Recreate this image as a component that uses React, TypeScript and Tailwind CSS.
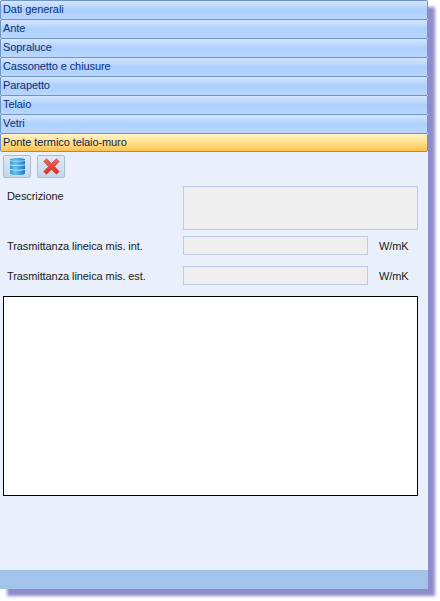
const tabs = ["Dati generali", "Ante", "Sopraluce", "Cassonetto e chiusure", "Parapetto", "Telaio", "Vetri"];

function DbIcon() {
  return (
    <svg width="15" height="17" viewBox="0 0 15 17">
      <defs>
        <linearGradient id="db" x1="0" y1="0" x2="1" y2="0">
          <stop offset="0" stopColor="#3a94d6" />
          <stop offset="0.35" stopColor="#63c4f0" />
          <stop offset="1" stopColor="#1f78c0" />
        </linearGradient>
      </defs>
      <path d="M0 1.500C1 0.500 3.500 0 7.500 0S14 0.500 15 1.500V15.500C14 16.500 11.500 17 7.500 17S1 16.500 0 15.500z" fill="url(#db)" />
      <path d="M0 2.500C2 3.500 13 3.500 15 2.500" stroke="#9fdcf7" strokeWidth="1" fill="none" />
      <path d="M0 6.800C2 7.600 13 7.600 15 6.800M0 11.500C2 12.300 13 12.300 15 11.500" stroke="#c4e6f7" strokeWidth="1" fill="none" />
    </svg>
  );
}

function XIcon() {
  return (
    <svg width="17" height="17" viewBox="0 0 17 17">
      <defs>
        <linearGradient id="xg" x1="0" y1="0" x2="0" y2="1">
          <stop offset="0" stopColor="#f2675c" />
          <stop offset="1" stopColor="#dd2a24" />
        </linearGradient>
      </defs>
      <path d="M3.500 0.800 8.500 5.500 13.500 0.800 16.200 3.500 11.500 8.500 16.200 13.500 13.500 16.200 8.500 11.500 3.500 16.200 0.800 13.500 5.500 8.500 0.800 3.500z" fill="url(#xg)" stroke="#c4504a" strokeWidth="0.8" strokeLinejoin="round" />
    </svg>
  );
}

function Btn({ children }: { children: React.ReactNode }) {
  return (
    <div className="w-[28px] h-[23px] flex items-center justify-center rounded-[2px] border border-[#a9bdd8] bg-gradient-to-b from-[#dfe9f6] to-[#c5d6ea]">
      {children}
    </div>
  );
}

function Tab({ label, active }: { label: string; active?: boolean }) {
  return (
    <div
      className={
        "shrink-0 pl-[3px] flex items-center text-[11px] tracking-[-0.09px] rounded-[2px] border border-[#6f94c8] " +
        (active
          ? "h-[19px] text-[#10234f] bg-gradient-to-b from-[#fff1c8] via-[#ffe08a] to-[#fdc24f]"
          : "h-[20px] -mb-px pb-[2px] text-[#0c2f78] bg-gradient-to-b from-[#d5e6fd] via-[#add0fd] to-[#b9d7fe]")
      }
    >
      <span className="-ml-px">{label}</span>
    </div>
  );
}

function Field({ label }: { label: string }) {
  return (
    <div className="flex items-center h-[19px]">
      <span className="w-[180px] pl-[4px] pt-[2px] shrink-0">{label}</span>
      <div className="w-[185px] h-[19px] border border-[#bccde3] bg-[#eeeeee]" />
      <span className="ml-[11px] pt-[2px]">W/mK</span>
    </div>
  );
}

export default function App() {
  return (
    <div className="w-[440px] h-[601px] bg-white overflow-hidden" style={{ fontFamily: '"Liberation Sans", Arial, sans-serif' }}>
      <div className="w-[428px] h-[589px] flex flex-col bg-[#e9f0fb] shadow-[7px_7px_3px_#8d8cca]">
        <div className="flex flex-col">
          {tabs.map((t) => (
            <Tab key={t} label={t} />
          ))}
          <Tab label="Ponte termico telaio-muro" active />
        </div>
        <div className="flex gap-[6px] pl-[3px] pt-[3px]">
          <Btn><DbIcon /></Btn>
          <Btn><XIcon /></Btn>
        </div>
        <div className="flex flex-col px-[3px] pt-[8px] text-[11px] tracking-[-0.09px] text-[#1a1a1a]">
          <div className="flex">
            <span className="w-[180px] pl-[4px] pt-[2px] shrink-0">Descrizione</span>
            <div className="w-[235px] h-[44px] border border-[#bccde3] bg-[#eeeeee]" />
          </div>
          <div className="flex flex-col gap-[11px] mt-[6px]">
            <Field label="Trasmittanza lineica mis. int." />
            <Field label="Trasmittanza lineica mis. est." />
          </div>
          <div className="w-[415px] h-[200px] mt-[11px] border border-black bg-white" />
        </div>
        <div className="mt-auto h-[19px] bg-[#a4c3ea]" />
      </div>
    </div>
  );
}
